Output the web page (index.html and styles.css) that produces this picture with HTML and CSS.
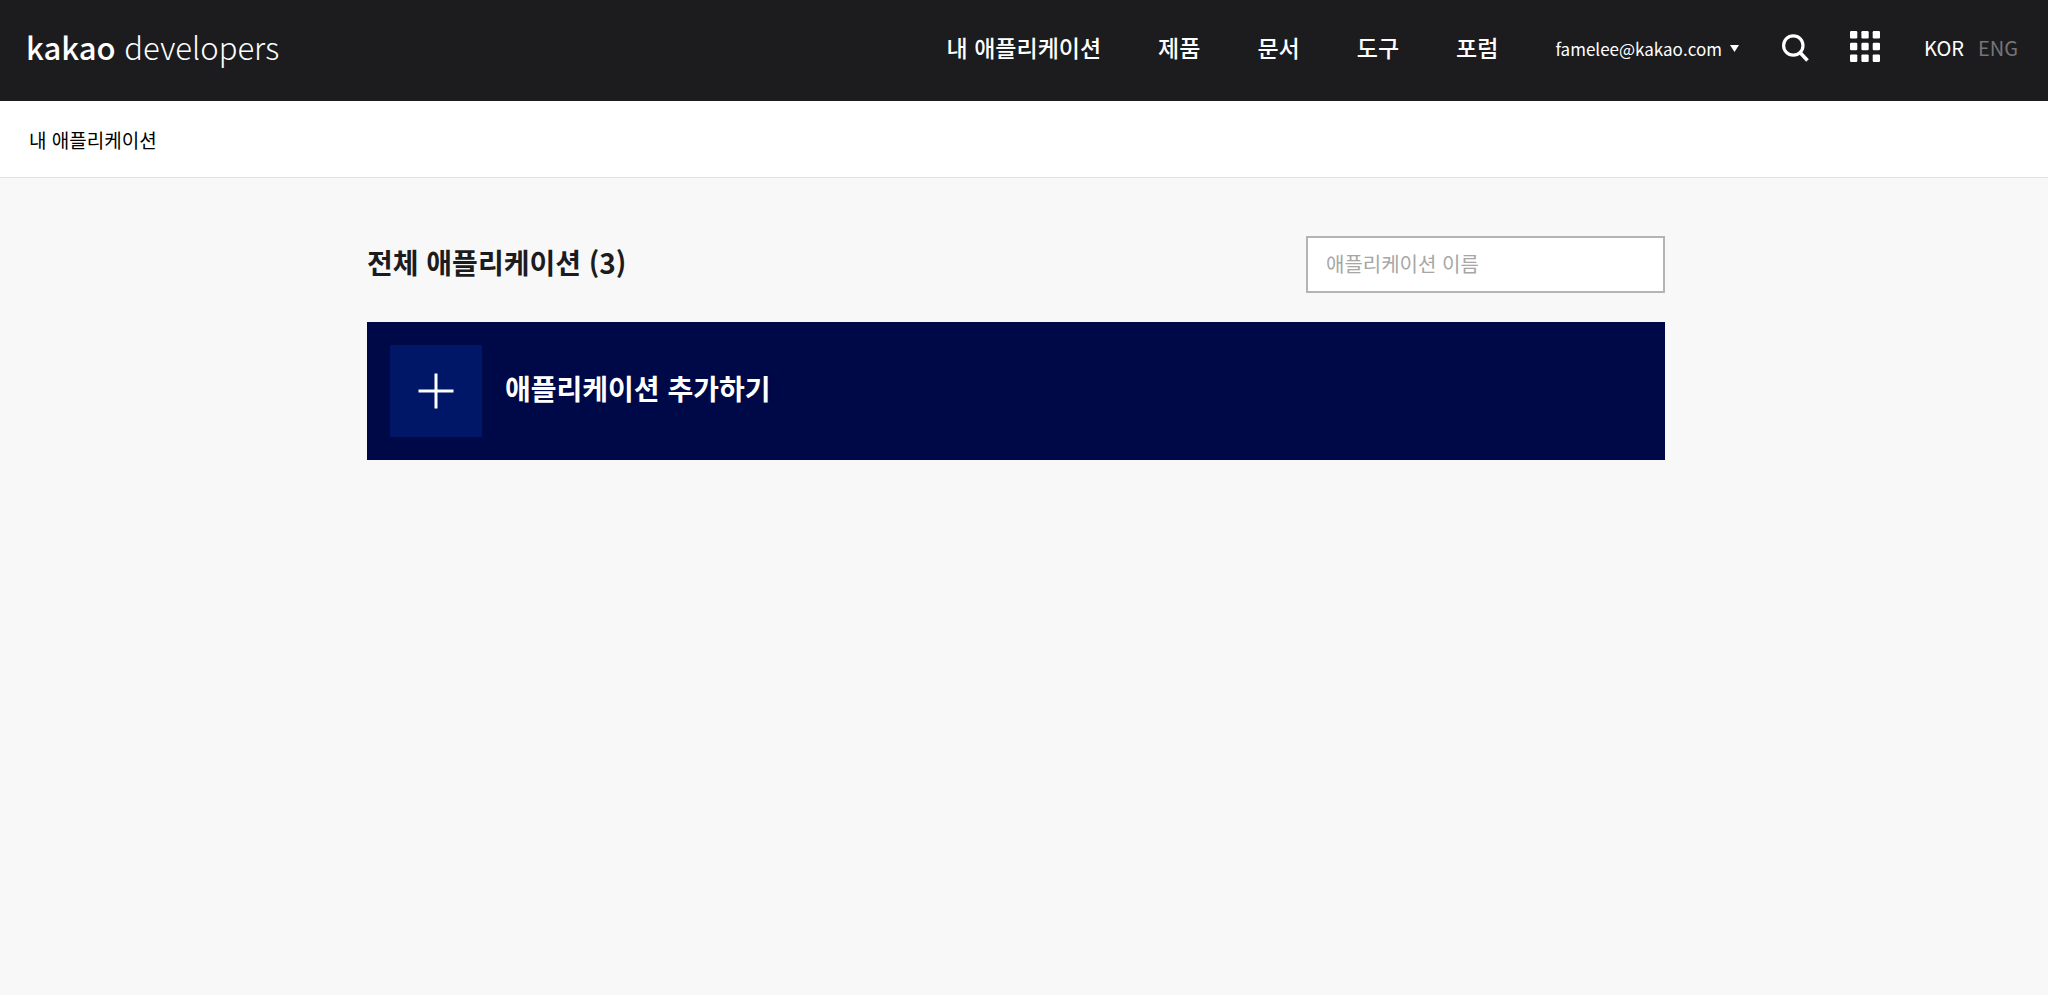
FILE: index.html
```html
<!DOCTYPE html>
<html lang="ko">
<head>
    <meta charset="UTF-8">
    <meta name="viewport" content="width=device-width, initial-scale=1.0">
    <title>Kakao Developers</title>
    <link rel="stylesheet" href="styles.css">
</head>
<body>
    <header class="header">
        <a class="logo" href="#"><b>kakao</b> developers</a>
        <nav class="nav">
            <a href="#">내 애플리케이션</a>
            <a href="#">제품</a>
            <a href="#">문서</a>
            <a href="#">도구</a>
            <a href="#">포럼</a>
        </nav>
        <button class="account" type="button">
            famelee@kakao.com
            <svg width="9" height="7" viewBox="0 0 9 7"><path d="M0 0h9L4.500 7z" fill="#fff"/></svg>
        </button>
        <button class="icon-btn search-btn" type="button" aria-label="검색">
            <svg width="27" height="28" viewBox="0 0 27 28" fill="none" stroke="#fff" stroke-width="3.200">
                <circle cx="11.300" cy="11.500" r="9.700"/>
                <path d="M18 18.500l7.500 8" stroke-width="3.600"/>
            </svg>
        </button>
        <button class="icon-btn menu-btn" type="button" aria-label="전체 메뉴">
            <svg width="30" height="31" viewBox="0 0 30 31" fill="#fff">
                <rect x="0" y="0" width="7.300" height="7.500" rx="1.200"/>
                <rect x="11.400" y="0" width="7.300" height="7.500" rx="1.200"/>
                <rect x="22.700" y="0" width="7.300" height="7.500" rx="1.200"/>
                <rect x="0" y="11.700" width="7.300" height="7.500" rx="1.200"/>
                <rect x="11.400" y="11.700" width="7.300" height="7.500" rx="1.200"/>
                <rect x="22.700" y="11.700" width="7.300" height="7.500" rx="1.200"/>
                <rect x="0" y="23.400" width="7.300" height="7.500" rx="1.200"/>
                <rect x="11.400" y="23.400" width="7.300" height="7.500" rx="1.200"/>
                <rect x="22.700" y="23.400" width="7.300" height="7.500" rx="1.200"/>
            </svg>
        </button>
        <div class="lang">
            <a class="on" href="#">KOR</a>
            <a href="#">ENG</a>
        </div>
    </header>

    <div class="location">
        <a href="#">내 애플리케이션</a>
    </div>

    <main class="content">
        <div class="inner">
            <div class="title-area">
                <h1>전체 애플리케이션 (3)</h1>
                <input class="search-input" type="text" placeholder="애플리케이션 이름" aria-label="애플리케이션 이름">
            </div>
            <button class="add-app" type="button">
                <span class="plus">
                    <svg width="36" height="36" viewBox="0 0 36 36" stroke="#fff" stroke-width="3"><path d="M18 0.500v35M0.500 18h35"/></svg>
                </span>
                <span class="add-text">애플리케이션 추가하기</span>
            </button>
        </div>
    </main>
</body>
</html>
```
FILE: styles.css
```css
* {
    box-sizing: border-box;
}

body {
    margin: 0;
    background-color: #f8f8f8;
    color: #1c1c1e;
    font-family: "Noto Sans CJK KR", sans-serif;
}

a {
    color: inherit;
    text-decoration: none;
}

button {
    border: 0;
    padding: 0;
    background: none;
    color: inherit;
    font-family: inherit;
    cursor: pointer;
}

svg {
    display: block;
}

/* header */
.header {
    display: flex;
    align-items: center;
    height: 101px;
    padding: 0 30px 8px 26px;
    background-color: #1c1c1e;
    color: #fff;
}

.logo {
    margin-right: auto;
    font-size: 31px;
    font-weight: 300;
    line-height: 48px;
}

.logo b {
    font-weight: 500;
}

.nav {
    display: flex;
    gap: 57px;
    font-size: 23px;
    font-weight: 500;
    line-height: 32px;
}

.account {
    display: flex;
    align-items: center;
    gap: 8px;
    margin-left: 57px;
    padding-top: 4px;
    font-size: 17px;
    line-height: 28px;
}

.search-btn {
    margin-left: 43px;
    padding-top: 2px;
}

.menu-btn {
    margin-left: 41px;
}

.lang {
    display: flex;
    gap: 14px;
    margin-left: 44px;
    padding-top: 2px;
    font-size: 20px;
    line-height: 32px;
    color: #757577;
}

.lang .on {
    color: #fff;
}

/* location */
.location {
    padding: 25px 29px 23px;
    border-bottom: 1px solid #e1e1e1;
    background-color: #fff;
    color: #000;
    font-size: 19px;
    line-height: 28px;
}

/* content */
.content {
    padding: 58px 16px 0 0;
}

.inner {
    max-width: 1298px;
    margin: 0 auto;
}

.title-area {
    display: flex;
    justify-content: space-between;
    margin-bottom: 29px;
}

h1 {
    margin: 0;
    font-size: 28px;
    font-weight: 700;
    line-height: 52px;
}

.search-input {
    width: 359px;
    height: 57px;
    padding: 0 18px 2px;
    border: 2px solid #b4b4b4;
    border-radius: 0;
    background-color: #fff;
    font-family: inherit;
    font-size: 20px;
}

.search-input::placeholder {
    color: #a6a6a6;
}

.add-app {
    display: flex;
    align-items: center;
    gap: 23px;
    width: 100%;
    padding: 23px;
    background-color: #000948;
    color: #fff;
}

.plus {
    display: flex;
    align-items: center;
    justify-content: center;
    width: 92px;
    height: 92px;
    background-color: #001666;
}

.add-text {
    padding-bottom: 6px;
    font-size: 28px;
    font-weight: 700;
}
```
